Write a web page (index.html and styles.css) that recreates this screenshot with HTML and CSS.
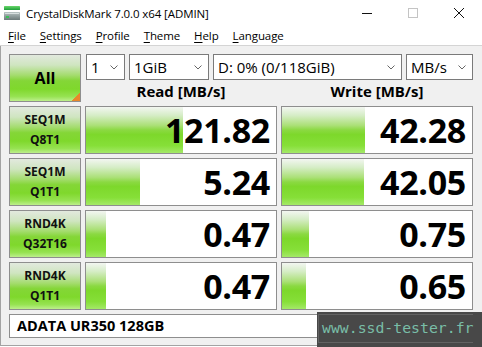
FILE: index.html
```html
<!DOCTYPE html>
<html>
<head>
<meta charset="utf-8">
<link rel="stylesheet" href="styles.css">
</head>
<body>
<div class="window">
  <div class="titlebar">
    <svg class="app-icon" width="16" height="16" viewBox="0 0 16 16">
      <defs>
        <linearGradient id="gb" x1="0" y1="0" x2="0" y2="1">
          <stop offset="0" stop-color="#6ad86a"/>
          <stop offset="1" stop-color="#1e9e3a"/>
        </linearGradient>
        <linearGradient id="gd" x1="0" y1="0" x2="0" y2="1">
          <stop offset="0" stop-color="#b9c4c4"/>
          <stop offset="1" stop-color="#6c7a7a"/>
        </linearGradient>
      </defs>
      <rect x="0" y="1" width="16" height="4" rx="0.5" fill="url(#gb)"/>
      <rect x="0" y="7" width="16" height="8" rx="0.5" fill="url(#gd)"/>
      <rect x="1" y="8" width="14" height="1" fill="#d8e0e0"/>
      <rect x="2" y="11" width="3" height="2" fill="#3cc05a"/>
    </svg>
    <span class="title">CrystalDiskMark 7.0.0 x64 [ADMIN]</span>
    <div class="controls">
      <span class="ctl"><svg width="10" height="10" viewBox="0 0 10 10"><path d="M0 5.5 H10" stroke="#111" stroke-width="1"/></svg></span>
      <span class="ctl"><svg width="10" height="10" viewBox="0 0 10 10"><rect x="0.5" y="0.5" width="9" height="9" fill="none" stroke="#c4c4c4" stroke-width="1"/></svg></span>
      <span class="ctl"><svg width="10" height="10" viewBox="0 0 10 10"><path d="M0 0 L10 10 M10 0 L0 10" stroke="#111" stroke-width="1"/></svg></span>
    </div>
  </div>
  <div class="menubar">
    <span class="menu"><u>F</u>ile</span>
    <span class="menu"><u>S</u>ettings</span>
    <span class="menu"><u>P</u>rofile</span>
    <span class="menu"><u>T</u>heme</span>
    <span class="menu"><u>H</u>elp</span>
    <span class="menu"><u>L</u>anguage</span>
  </div>
  <div class="main">
    <div class="top">
      <div class="all">All</div>
      <div class="selects">
        <div class="select s-count"><span>1</span><svg class="chev" width="8" height="5" viewBox="0 0 8 5"><path d="M0.5 0.5 L4 4 L7.5 0.5" fill="none" stroke="#666"/></svg></div>
        <div class="select s-size"><span>1GiB</span><svg class="chev" width="8" height="5" viewBox="0 0 8 5"><path d="M0.5 0.5 L4 4 L7.5 0.5" fill="none" stroke="#666"/></svg></div>
        <div class="select s-drive"><span>D: 0% (0/118GiB)</span><svg class="chev" width="8" height="5" viewBox="0 0 8 5"><path d="M0.5 0.5 L4 4 L7.5 0.5" fill="none" stroke="#666"/></svg></div>
        <div class="select s-unit"><span>MB/s</span><svg class="chev" width="8" height="5" viewBox="0 0 8 5"><path d="M0.5 0.5 L4 4 L7.5 0.5" fill="none" stroke="#666"/></svg></div>
      </div>
      <div class="head">Read [MB/s]</div>
      <div class="head">Write [MB/s]</div>
    </div>
    <div class="results">
      <div class="label">SEQ1M<br>Q8T1</div>
      <div class="val" style="--w:97px">121.82</div>
      <div class="val" style="--w:83px">42.28</div>

      <div class="label">SEQ1M<br>Q1T1</div>
      <div class="val" style="--w:54px">5.24</div>
      <div class="val" style="--w:82px">42.05</div>

      <div class="label">RND4K<br>Q32T16</div>
      <div class="val" style="--w:20px">0.47</div>
      <div class="val" style="--w:27px">0.75</div>

      <div class="label">RND4K<br>Q1T1</div>
      <div class="val" style="--w:20px">0.47</div>
      <div class="val" style="--w:24px">0.65</div>
    </div>
    <div class="footer">ADATA UR350 128GB</div>
  </div>
  <div class="watermark"><span>www.ssd-tester.fr</span></div>
</div>
</body>
</html>
```
FILE: styles.css
```css
html, body {
  margin: 0;
  padding: 0;
  background: #ffffff;
}
body {
  width: 482px;
  height: 347px;
  overflow: hidden;
  font-family: "Open Sans", "Noto Sans", sans-serif;
  color: #000;
}
.window {
  position: relative;
  width: 482px;
  height: 347px;
}
.titlebar {
  height: 26px;
  display: flex;
  align-items: center;
}
.app-icon {
  margin-left: 4px;
  flex: none;
}
.title {
  margin-left: 6px;
  font-size: 11.5px;
  letter-spacing: -0.1px;
}
.controls {
  margin-left: auto;
  display: flex;
  align-self: stretch;
}
.ctl {
  width: 46px;
  display: flex;
  align-items: center;
  justify-content: center;
}
.menubar {
  height: 19px;
  display: flex;
  align-items: center;
  padding-left: 1px;
  border-bottom: 1px solid #d4d4d4;
  font-size: 11.5px;
}
.menu {
  padding: 0 7px;
  letter-spacing: -0.1px;
}
.menu u {
  text-decoration-thickness: 1px;
  text-underline-offset: 2px;
}
.main {
  background: #f0f0f0;
  border-left: 1px solid #a3a3a3;
  border-bottom: 1px solid #a3a3a3;
  padding: 8px 9px 7px 8px;
}
.top {
  display: grid;
  grid-template-columns: 72px 192px 192px;
  grid-template-rows: 26px 22px;
  column-gap: 4px;
}
.all {
  grid-row: 1 / 3;
  position: relative;
  box-sizing: border-box;
  border: 1px solid #8e8e8e;
  background: linear-gradient(to bottom, #e2e9de 0%, #cfe5c0 22%, #a4dc6e 44%, #84d637 56%, #7fd82c 74%, #96e251 90%, #bdef8c 100%);
  display: flex;
  align-items: center;
  justify-content: center;
  font-weight: 700;
  font-size: 16px;
}
.all::after {
  content: "";
  position: absolute;
  right: 0;
  bottom: 0;
  width: 8px;
  height: 8px;
  background: linear-gradient(135deg, transparent 50%, #e8872c 50%);
}
.selects {
  grid-column: 2 / 4;
  display: flex;
  gap: 4px;
  padding-left: 1px;
}
.select {
  box-sizing: border-box;
  height: 26px;
  background: #fff;
  border: 1px solid #7a7a7a;
  display: flex;
  align-items: center;
  padding: 0 6px 0 4px;
  font-size: 15px;
}
.select span {
  flex: 1;
}
.chev {
  flex: none;
}
.s-count { width: 39px; }
.s-size { width: 80px; }
.s-drive { width: 189px; }
.s-unit { width: 67px; }
.head {
  text-align: center;
  font-weight: 700;
  font-size: 15px;
  line-height: 22px;
}
.results {
  margin-top: 4px;
  display: grid;
  grid-template-columns: 72px 192px 192px;
  grid-auto-rows: 48px;
  gap: 4px;
}
.label {
  box-sizing: border-box;
  border: 1px solid #8e8e8e;
  background: linear-gradient(to bottom, #e2e9de 0%, #cfe5c0 22%, #a4dc6e 44%, #84d637 56%, #7fd82c 74%, #96e251 90%, #bdef8c 100%);
  display: flex;
  align-items: center;
  justify-content: center;
  text-align: center;
  font-weight: 700;
  font-size: 12px;
  line-height: 20px;
  color: #111;
}
.val {
  box-sizing: border-box;
  border: 1px solid #8e8e8e;
  background-color: #fff;
  background-image: linear-gradient(to bottom, #f3f6f1 0%, #d6edc7 18%, #abe077 40%, #8bd942 50%, #7dd82b 60%, #86df38 84%, #a4e968 100%);
  background-repeat: no-repeat;
  background-size: var(--w) 100%;
  display: flex;
  align-items: center;
  justify-content: flex-end;
  padding-right: 6px;
  font-weight: 700;
  font-size: 34px;
  letter-spacing: -0.3px;
  color: #000;
}
.footer {
  margin-top: 4px;
  box-sizing: border-box;
  height: 24px;
  background: #fff;
  border: 1px solid #8e8e8e;
  padding-left: 7px;
  font-weight: 700;
  font-size: 14.5px;
  line-height: 22px;
}
.watermark {
  position: absolute;
  left: 317px;
  top: 312px;
  width: 165px;
  height: 35px;
  background: #484848;
  box-sizing: border-box;
  padding: 2px 9px 4px 1px;
}
.watermark span {
  display: block;
  height: 100%;
  box-sizing: border-box;
  border: 1px solid #626262;
  border-right: none;
  padding-left: 3px;
  font-family: "DejaVu Sans Mono", "Liberation Mono", monospace;
  font-size: 14.8px;
  line-height: 26px;
  color: #79bda7;
  white-space: nowrap;
}
```
